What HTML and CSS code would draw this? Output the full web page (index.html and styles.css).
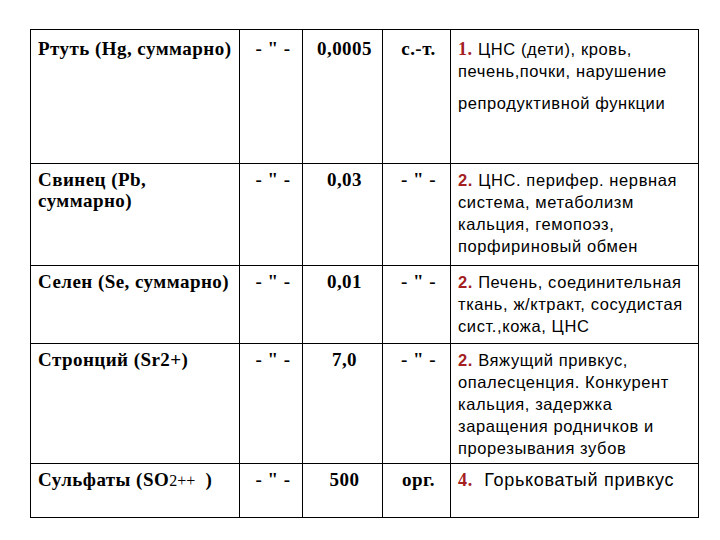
FILE: index.html
```html
<!DOCTYPE html>
<html lang="ru">
<head>
<meta charset="utf-8">
<title>Таблица</title>
<link rel="stylesheet" href="styles.css">
</head>
<body>
<table class="grid">
  <colgroup>
    <col class="c-name">
    <col class="c-unit">
    <col class="c-val">
    <col class="c-sign">
    <col class="c-desc">
  </colgroup>
  <tr class="r1">
    <td class="name">Ртуть (Hg, суммарно)</td>
    <td class="mid">- " -</td>
    <td class="mid">0,0005</td>
    <td class="mid">с.-т.</td>
    <td class="desc"><b class="num serif">1.</b> ЦНС (дети), кровь, печень,почки, нарушение<span class="para">репродуктивной функции</span></td>
  </tr>
  <tr class="r2">
    <td class="name">Свинец (Pb, суммарно)</td>
    <td class="mid">- " -</td>
    <td class="mid">0,03</td>
    <td class="mid">- " -</td>
    <td class="desc"><b class="num">2.</b> ЦНС. перифер. нервная система, метаболизм кальция, гемопоэз, порфириновый обмен</td>
  </tr>
  <tr class="r3">
    <td class="name">Селен (Se, суммарно)</td>
    <td class="mid">- " -</td>
    <td class="mid">0,01</td>
    <td class="mid">- " -</td>
    <td class="desc"><b class="num">2.</b> Печень, соединительная ткань, ж/ктракт, сосудистая сист.,кожа, ЦНС</td>
  </tr>
  <tr class="r4">
    <td class="name">Стронций (Sr2+)</td>
    <td class="mid">- " -</td>
    <td class="mid">7,0</td>
    <td class="mid">- " -</td>
    <td class="desc"><b class="num">2.</b> Вяжущий привкус, опалесценция. Конкурент кальция, задержка заращения родничков и прорезывания зубов</td>
  </tr>
  <tr class="r5">
    <td class="name">Сульфаты (SO<span class="thin">2++</span>&nbsp;&nbsp;)</td>
    <td class="mid">- " -</td>
    <td class="mid">500</td>
    <td class="mid">орг.</td>
    <td class="desc big"><b class="num serif">4.</b>&nbsp; Горьковатый привкус</td>
  </tr>
</table>
</body>
</html>
```
FILE: styles.css
```css
html, body {
  margin: 0;
  background: #ffffff;
}
body {
  padding: 29px 0 0 30px;
}
.grid {
  border-collapse: collapse;
  table-layout: fixed;
  width: 668px;
}
.c-name { width: 209px; }
.c-unit { width: 63px; }
.c-val { width: 80px; }
.c-sign { width: 68px; }
.c-desc { width: 248px; }
.grid td {
  border: 1.5px solid #000;
  vertical-align: top;
  padding: 5px 3px 0 7px;
  color: #000;
}
.grid td.name {
  padding-right: 0;
}
.r1 { height: 134px; }
.r2 { height: 102px; }
.r3 { height: 78px; }
.r4 { height: 120px; }
.r5 { height: 54px; }
.r1 td { padding-top: 8px; }
.name, .mid {
  font-family: "Liberation Serif", "Times New Roman", serif;
  font-weight: bold;
  font-size: 19px;
  letter-spacing: 0.45px;
  line-height: 21px;
}
.mid {
  text-align: center;
  padding-left: 2px;
  padding-right: 2px;
}
.thin {
  font-weight: normal;
  font-size: 16px;
  letter-spacing: 0;
}
.desc {
  font-family: "Liberation Sans", Arial, sans-serif;
  font-size: 16.5px;
  letter-spacing: 0.6px;
  line-height: 22px;
  color: #111;
}
.desc.big {
  font-size: 18px;
  letter-spacing: 0.7px;
}
.num {
  color: #a3201f;
  font-weight: bold;
}
.num.serif {
  font-family: "Liberation Serif", "Times New Roman", serif;
  font-size: 18px;
}
.para {
  display: block;
  margin-top: 10px;
}
```
